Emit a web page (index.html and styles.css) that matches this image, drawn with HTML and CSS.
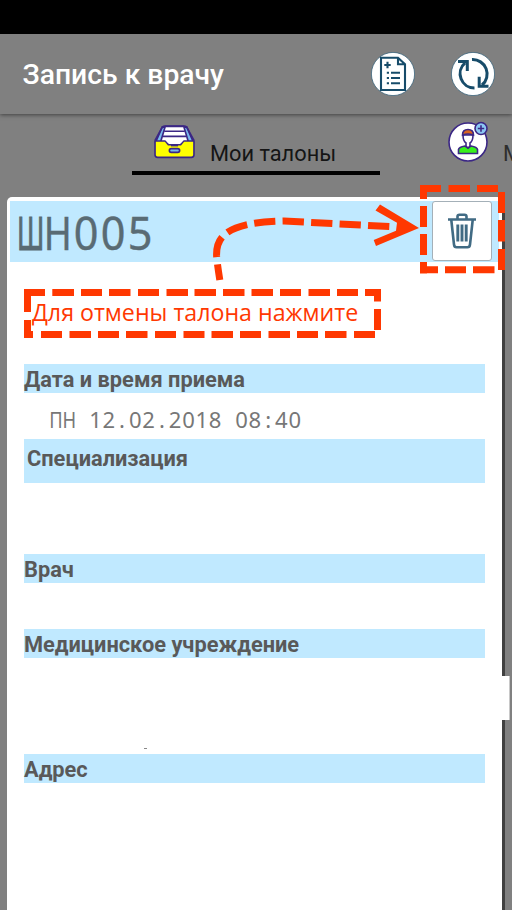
FILE: index.html
```html
<!DOCTYPE html>
<html lang="ru">
<head>
<meta charset="utf-8">
<title>Запись к врачу</title>
<link rel="stylesheet" href="styles.css">
</head>
<body>
<div class="screen">
  <div class="status"></div>
  <header class="appbar">
    <h1>Запись к врачу</h1>
    <svg class="round" viewBox="0 0 44 44">
      <circle cx="22" cy="22" r="21.6"/>
      <path d="M10 5.7H27L34 12.3V38H10Z M27 5.7V12.3H34 M16.5 9.8V16.2M13.3 13H19.7 M15.8 20.8H18M20 20.8H29M15.8 26H18M20 26H29M15.8 31.3H18M20 31.3H29"/>
    </svg>
    <svg class="round" viewBox="0 0 44 44">
      <circle cx="22" cy="22" r="21.6"/>
      <path class="thick" d="M21 7.6A14.4 14.4 0 0 1 31 33M23.5 36A14.4 14.4 0 0 1 14 10.8M7 9.5H16.3V19M37.5 34.3H28.2V24.8"/>
    </svg>
  </header>
  <nav class="tabs">
    <div class="tab active">
      <svg class="tray" viewBox="0 0 40 33">
        <path fill="#79b9ed" d="M8 2H32L38.5 17H1.5Z"/>
        <path fill="#fff" d="M11 1.2H29L34 18H6Z"/>
        <path fill="none" d="M10 6H30M8.5 11H31.5"/>
        <path fill="#ff0" d="M1 15.5H11L14 19H26L29 15.5H39V29Q39 31.5 36.5 31.5H3.5Q1 31.5 1 29Z"/>
        <path fill="none" d="M1 15L8 2Q9 1 11 1H29Q31 1 32 2L39 15"/>
        <path fill="#fff" stroke="none" d="M11 14.5H29L25.5 18.5H14.5Z"/>
        <path fill="none" d="M16.5 20H23.5"/>
        <rect x="15" y="23" width="10" height="3.6" rx="1.8" fill="#79b9ed"/>
      </svg>
      <span>Мои талоны</span>
    </div>
    <div class="tab next">
      <svg class="person" viewBox="0 0 42 42">
        <circle cx="20" cy="21" r="19" fill="#fff"/>
        <path fill="#38f01d" d="M10.5 32.5V28.5Q11 26 17 25L20 27L23 25Q29 26 29.5 28.5V32.5Z"/>
        <path fill="#fff" d="M15 14Q15 20 18 22V25L20 27L22 25V22Q25 20 25 14Z"/>
        <path fill="#d96520" d="M14.5 14Q14.5 8.5 20 8.5Q25.5 8.5 25.5 14Q20 12 14.5 14Z"/>
        <circle cx="33" cy="7.5" r="6" fill="#8bc8f4"/>
        <path fill="none" d="M33 4.3V10.7M29.8 7.5H36.2"/>
      </svg>
      <span>М</span>
    </div>
  </nav>
  <main class="card">
    <div class="ticket">
      <div class="mono number"><span class="cell"><b class="wide">Ш</b></span><span class="cell"><b class="narrow">Н</b></span><span class="cell"><b>0</b></span><span class="cell"><b>0</b></span><span class="cell"><b>5</b></span></div>
      <button class="delete" aria-label="Отменить">
        <svg viewBox="0 0 28 36"><path d="M0 6.5H28M9.5 5.5V3.5Q9.5 1.7 11.5 1.7H16.5Q18.5 1.7 18.5 3.5V5.5M3.3 7L6 31.5Q6.3 34.2 8.5 34.2H19.5Q21.7 34.2 22 31.5L24.7 7"/><path class="bars" d="M9.8 11.5V28.5M14 11.5V28.5M18.2 11.5V28.5"/></svg>
      </button>
    </div>
    <div class="hint"><span>Для отмены талона нажмите</span></div>
    <section class="date">
      <h2>Дата и время приема</h2>
      <div class="mono value"><span class="cell"><b class="narrow">П</b></span><span class="cell"><b class="narrow">Н</b></span><span class="cell"></span><span class="cell">1</span><span class="cell">2</span><span class="cell">.</span><span class="cell">0</span><span class="cell">2</span><span class="cell">.</span><span class="cell">2</span><span class="cell">0</span><span class="cell">1</span><span class="cell">8</span><span class="cell"></span><span class="cell">0</span><span class="cell">8</span><span class="cell">:</span><span class="cell">4</span><span class="cell">0</span></div>
    </section>
    <section class="speciality"><h2>Специализация</h2></section>
    <section class="doctor"><h2>Врач</h2></section>
    <section class="clinic"><h2>Медицинское учреждение</h2><i class="speck"></i></section>
    <section class="address"><h2>Адрес</h2></section>
  </main>
  <div class="handle"></div>
  <svg class="notes" viewBox="0 0 512 910">
    <path d="M24 292.5H45M52.3 292.5H74M81 292.5H102M109 292.5H130.5M138 292.5H159M166.5 292.5H188M194.5 292.5H216M223 292.5H244.5M251.5 292.5H273M280 292.5H301M308.5 292.5H330M337 292.5H358M365 292.5H381M377.5 289V301.5M377.5 309V330M27.5 289V312M27.5 320V338M24 334.5H33M41 334.5H62M69.5 334.5H91M98 334.5H119M126 334.5H147.5M155 334.5H176M183.5 334.5H204.5M211.5 334.5H233M240 334.5H261M268.5 334.5H290M297 334.5H318M325 334.5H346.5M354 334.5H375"/>
    <path d="M420 188.5H441M448.5 188.5H470M477 188.5H498M501.5 192V213M501.5 220V241.5M501.5 249V270M420 269.8H438M445 269.8H466M473 269.8H494.5M423.5 185V199M423.5 206V227M423.5 234V255M423.5 262V273.5"/>
    <path class="curve" d="M389.3 226.5L284 221C222 222 216 240 216.6 256Q217 262 219.8 280"/>
    <path class="head" d="M380 204.5L419 228L376 246L373.7 240L396 230.7L397 222.7L375.5 210.5Z"/>
  </svg>
</div>
</body>
</html>
```
FILE: styles.css
```css
* { box-sizing: border-box; }
body { margin: 0; font-family: Roboto, sans-serif; }
.screen { position: relative; width: 512px; height: 910px; overflow: hidden; background: #808080; display: flex; flex-direction: column; }
.status { height: 34px; background: #000; flex: none; }
.appbar { height: 80px; flex: none; display: flex; align-items: center; padding: 0 17.5px 0 22.5px; background: #808080; box-shadow: 0 1px 4px rgba(0,0,0,.5); z-index: 1; }
h1 { margin: 0 auto 0 0; padding-top: 2px; color: #fff; font-size: 28.3px; line-height: 36px; font-weight: 500; white-space: nowrap; }
.round { width: 44px; height: 44px; margin-left: 36px; }
.round circle { fill: #fff; stroke: #3b647c; stroke-width: .8; }
.round path { fill: none; stroke: #174c6a; stroke-width: 2.1; }
.round .thick { stroke-width: 3; }
.tabs { height: 83px; flex: none; display: flex; padding-left: 132px; }
.tab { height: 61px; flex: none; display: flex; color: #151515; font-size: 21.8px; white-space: nowrap; }
.tab span { padding-top: 26px; line-height: 27px; }
.active { width: 248px; border-bottom: 4px solid #000; padding-left: 22px; }
.tray { width: 41px; height: 34px; margin: 11px 15px 0 0; stroke: #3b2785; stroke-width: 1.6; }
.next { margin-left: 68px; color: #2e2e2e; }
.person { width: 42px; height: 42px; margin: 7px 13px 0 0; stroke: #3b2785; stroke-width: 1.6; }
.card { width: 495px; flex: 1; margin-left: 7px; background: #fff; border-radius: 5px 5px 0 0; box-shadow: 3px 5px 0 #404040; display: flex; flex-direction: column; padding: 4px 3px 0; }
.ticket { height: 61px; flex: none; display: flex; justify-content: space-between; background: #c0e9ff; padding: 0 7px; }
.mono { display: flex; font-family: "Noto Sans", sans-serif; }
.cell { width: .603em; flex: none; display: flex; justify-content: center; }
.cell b { font-weight: 400; }
.cell .narrow { transform: scaleX(.83); }
.cell .wide { transform: scaleX(.58); -webkit-text-stroke: 1.2px; }
.number { font-size: 45.5px; line-height: 62px; color: #596b74; -webkit-text-stroke: .4px; }
.number b { transform: scaleX(.95); }
.delete { width: 60px; height: 60px; padding: 0; border: 1px solid #a4b0b8; border-radius: 3px; background: #fff; display: grid; place-items: center; }
.delete svg { width: 28px; height: 36px; fill: none; stroke: #416b84; stroke-width: 2.6; }
.delete .bars { stroke-width: 2.9; }
.hint { height: 49px; flex: none; margin: 27px 0 26px 14px; padding: 7px 0 0 8px; color: #ff3801; font: 23.2px/32px "Open Sans", sans-serif; white-space: nowrap; }
section { margin: 0 14px; flex: none; }
h2 { margin: 0; height: 29px; padding-top: 2px; background: #c0e9ff; color: #595959; font-size: 21.8px; font-weight: 700; line-height: 28px; }
.date { height: 75px; }
.value { padding-left: 25px; font-size: 22.05px; line-height: 30px; margin-top: 11px; color: #777; }
.speciality { height: 115px; }
.speciality h2 { height: 44px; padding: 6px 3px; }
.doctor { height: 75px; }
.clinic { height: 125px; }
.speck { display: block; width: 3px; height: 1px; margin: 90px 0 0 120px; background: #888; }
.handle { position: absolute; left: 502px; top: 676px; width: 8px; height: 44px; background: #fff; border-right: 1px solid #c8c8c8; }
.notes { position: absolute; left: 0; top: 0; width: 512px; height: 910px; pointer-events: none; z-index: 2; }
.notes path { fill: none; stroke: #ff3801; stroke-width: 7; }
.notes .curve { stroke-dasharray: 21.3 7.2; }
.notes .head { fill: #ff3801; stroke: none; }
```
